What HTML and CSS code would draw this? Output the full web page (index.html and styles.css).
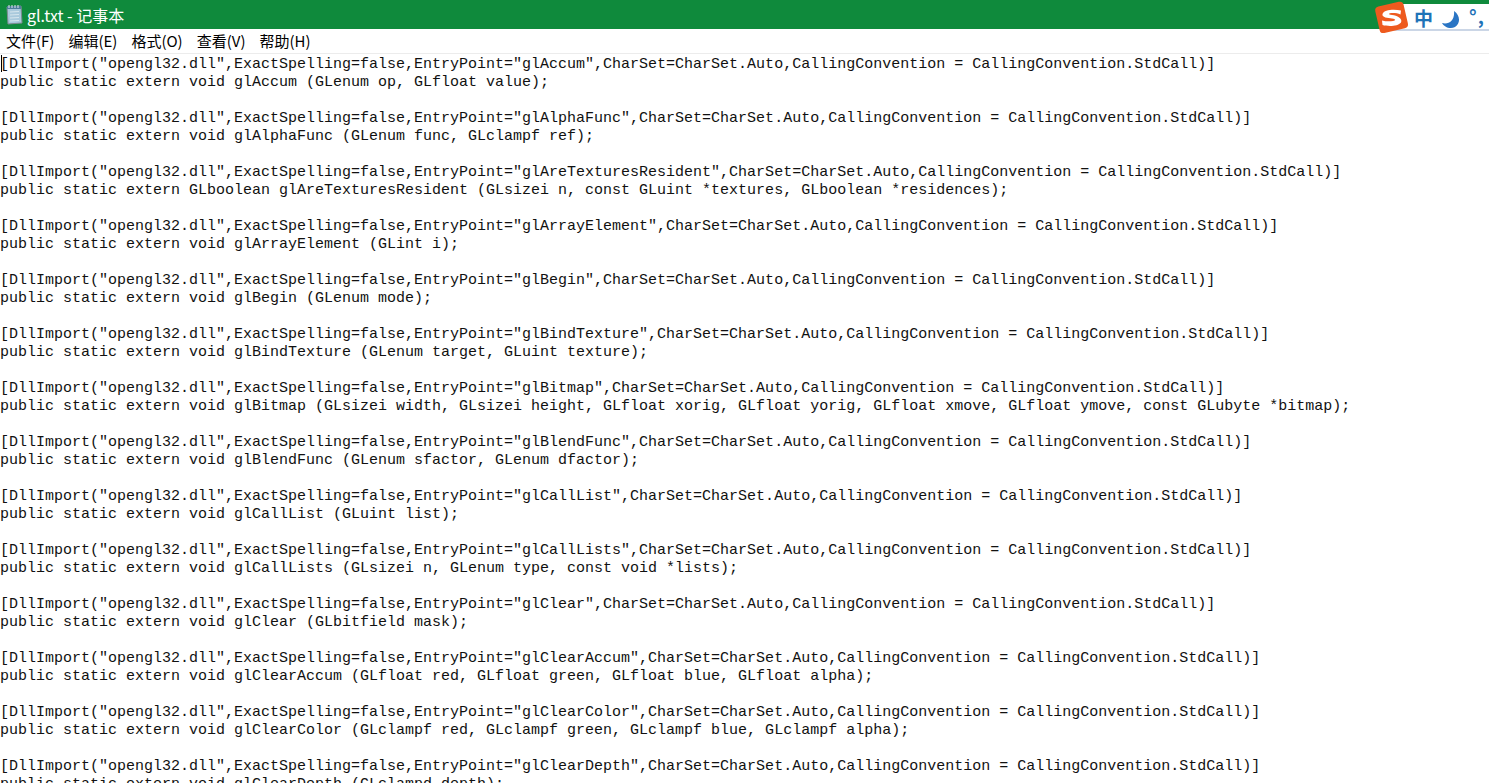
FILE: index.html
```html
<!DOCTYPE html>
<html lang="zh">
<head>
<meta charset="utf-8">
<title>gl.txt - 记事本</title>
<link rel="stylesheet" href="styles.css">
</head>
<body>
<header class="titlebar">
  <svg class="app-icon" width="18" height="21" viewBox="0 0 18 21">
    <path d="M2 3 L16 2 L17 19 L3 20 Z" fill="#a9c9dc" stroke="#7d8b92"/>
    <path d="M2 2h14v3H2z" fill="#4f7f9c"/>
    <path d="M5 8l9-.5M5 11l9-.5M5 14l9-.5M5 17l9-.5" stroke="#d7e6ee"/>
    <path d="M4 1v3M7 1v3M10 1v3M13 1v3" stroke="#e4eaec"/>
  </svg>
  <span class="title">gl.txt - 记事本</span>
</header>
<nav class="menubar">
  <span>文件(F)</span><span>编辑(E)</span><span>格式(O)</span><span>查看(V)</span><span>帮助(H)</span>
</nav>
<aside class="ime">
  <svg class="ime-logo" width="38" height="36" viewBox="0 0 38 36">
    <rect x="4" y="4" width="29" height="27" rx="4" fill="#ee5a1e" transform="rotate(-13 18 17)"/>
    <path d="M28 10.500 C21 9 11 9.500 9.500 14 C8.500 17.500 15 18 19 18.500 C23 19 23 20.500 20 21 C17 21.500 12.500 21.500 9 20.500 L9.500 25 C15 26.500 25 26.500 28 22.500 C30 18.500 24 15.500 19 15 C15.500 14.700 15 13.500 18 13 C21 12.700 24.500 13 27.500 14.500 Z" fill="#fff"/>
  </svg>
  <span class="ime-zh">中</span>
  <svg class="ime-moon" width="19" height="18" viewBox="0 0 19 18">
    <path d="M12 0 C18 4 19 12 13 16 C8 18.500 2 16 0 12 C7 14 13 9 12 0 Z" fill="#2a75c4"/>
  </svg>
  <span class="ime-punct">°,</span>
</aside>
<i class="caret"></i>
<pre class="text" id="doc">[DllImport("opengl32.dll",ExactSpelling=false,EntryPoint="glAccum",CharSet=CharSet.Auto,CallingConvention = CallingConvention.StdCall)]
public static extern void glAccum (GLenum op, GLfloat value);

[DllImport("opengl32.dll",ExactSpelling=false,EntryPoint="glAlphaFunc",CharSet=CharSet.Auto,CallingConvention = CallingConvention.StdCall)]
public static extern void glAlphaFunc (GLenum func, GLclampf ref);

[DllImport("opengl32.dll",ExactSpelling=false,EntryPoint="glAreTexturesResident",CharSet=CharSet.Auto,CallingConvention = CallingConvention.StdCall)]
public static extern GLboolean glAreTexturesResident (GLsizei n, const GLuint *textures, GLboolean *residences);

[DllImport("opengl32.dll",ExactSpelling=false,EntryPoint="glArrayElement",CharSet=CharSet.Auto,CallingConvention = CallingConvention.StdCall)]
public static extern void glArrayElement (GLint i);

[DllImport("opengl32.dll",ExactSpelling=false,EntryPoint="glBegin",CharSet=CharSet.Auto,CallingConvention = CallingConvention.StdCall)]
public static extern void glBegin (GLenum mode);

[DllImport("opengl32.dll",ExactSpelling=false,EntryPoint="glBindTexture",CharSet=CharSet.Auto,CallingConvention = CallingConvention.StdCall)]
public static extern void glBindTexture (GLenum target, GLuint texture);

[DllImport("opengl32.dll",ExactSpelling=false,EntryPoint="glBitmap",CharSet=CharSet.Auto,CallingConvention = CallingConvention.StdCall)]
public static extern void glBitmap (GLsizei width, GLsizei height, GLfloat xorig, GLfloat yorig, GLfloat xmove, GLfloat ymove, const GLubyte *bitmap);

[DllImport("opengl32.dll",ExactSpelling=false,EntryPoint="glBlendFunc",CharSet=CharSet.Auto,CallingConvention = CallingConvention.StdCall)]
public static extern void glBlendFunc (GLenum sfactor, GLenum dfactor);

[DllImport("opengl32.dll",ExactSpelling=false,EntryPoint="glCallList",CharSet=CharSet.Auto,CallingConvention = CallingConvention.StdCall)]
public static extern void glCallList (GLuint list);

[DllImport("opengl32.dll",ExactSpelling=false,EntryPoint="glCallLists",CharSet=CharSet.Auto,CallingConvention = CallingConvention.StdCall)]
public static extern void glCallLists (GLsizei n, GLenum type, const void *lists);

[DllImport("opengl32.dll",ExactSpelling=false,EntryPoint="glClear",CharSet=CharSet.Auto,CallingConvention = CallingConvention.StdCall)]
public static extern void glClear (GLbitfield mask);

[DllImport("opengl32.dll",ExactSpelling=false,EntryPoint="glClearAccum",CharSet=CharSet.Auto,CallingConvention = CallingConvention.StdCall)]
public static extern void glClearAccum (GLfloat red, GLfloat green, GLfloat blue, GLfloat alpha);

[DllImport("opengl32.dll",ExactSpelling=false,EntryPoint="glClearColor",CharSet=CharSet.Auto,CallingConvention = CallingConvention.StdCall)]
public static extern void glClearColor (GLclampf red, GLclampf green, GLclampf blue, GLclampf alpha);

[DllImport("opengl32.dll",ExactSpelling=false,EntryPoint="glClearDepth",CharSet=CharSet.Auto,CallingConvention = CallingConvention.StdCall)]
public static extern void glClearDepth (GLclampd depth);</pre>
</body>
</html>
```
FILE: styles.css
```css
html, body {
  margin: 0;
  height: 100%;
  overflow: hidden;
  background: #fff;
}
body {
  display: flex;
  flex-direction: column;
  position: relative;
  font-family: "Noto Sans CJK SC", "Liberation Sans", sans-serif;
  color: #000;
}
.titlebar {
  height: 29px;
  background: #0f8a3c;
  display: flex;
  align-items: center;
  gap: 4px;
  padding-left: 5px;
  flex: none;
}
.app-icon { flex: none; }
.title {
  color: #fff;
  font-size: 16px;
  line-height: 28px;
}
.menubar {
  height: 23px;
  padding-bottom: 1px;
  display: flex;
  gap: 14px;
  padding-left: 6px;
  align-items: center;
  font-size: 15px;
  border-bottom: 1px solid #ececec;
  flex: none;
}
.text {
  margin: 0;
  padding: 2px 0 0 0;
  font-family: "Liberation Mono", monospace;
  font-size: 15px;
  line-height: 18px;
  color: #111;
  white-space: pre;
  flex: 1;
  overflow: hidden;
}
.caret {
  position: absolute;
  left: 1px;
  top: 55px;
  width: 1px;
  height: 17px;
  background: #000;
}
.ime {
  position: absolute;
  top: 4px;
  right: 0;
  width: 100px;
  height: 25px;
  background: #fff;
  border-bottom: 2px solid #cbd6e6;
}
.ime-logo {
  position: absolute;
  left: -16px;
  top: -4px;
}
.ime-zh {
  position: absolute;
  left: 25px;
  top: 0;
  color: #1f73b8;
  font-size: 19px;
  font-weight: 700;
  line-height: 27px;
}
.ime-moon {
  position: absolute;
  left: 53px;
  top: 7px;
}
.ime-punct {
  position: absolute;
  left: 80px;
  top: -2px;
  color: #1f73b8;
  font-size: 19px;
  font-weight: 700;
  letter-spacing: 1px;
  line-height: 27px;
}
```
